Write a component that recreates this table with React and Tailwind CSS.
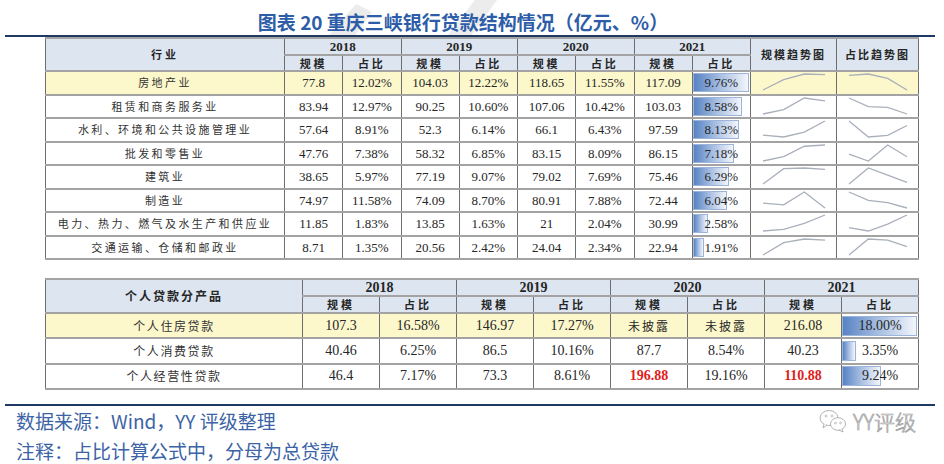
import React from "react";

const industry = [
  { name: "房地产业", hl: true, v: [77.8, 104.03, 118.65, 117.09], p: [12.02, 12.22, 11.55, 9.76] },
  { name: "租赁和商务服务业", v: [83.94, 90.25, 107.06, 103.03], p: [12.97, 10.6, 10.42, 8.58] },
  { name: "水利、环境和公共设施管理业", v: [57.64, 52.3, 66.1, 97.59], p: [8.91, 6.14, 6.43, 8.13] },
  { name: "批发和零售业", v: [47.76, 58.32, 83.15, 86.15], p: [7.38, 6.85, 8.09, 7.18] },
  { name: "建筑业", v: [38.65, 77.19, 79.02, 75.46], p: [5.97, 9.07, 7.69, 6.29] },
  { name: "制造业", v: [74.97, 74.09, 80.91, 72.44], p: [11.58, 8.7, 7.88, 6.04] },
  { name: "电力、热力、燃气及水生产和供应业", v: [11.85, 13.85, 21, 30.99], p: [1.83, 1.63, 2.04, 2.58] },
  { name: "交通运输、仓储和邮政业", v: [8.71, 20.56, 24.04, 22.94], p: [1.35, 2.42, 2.34, 1.91] },
];

const vText = [
  ["77.8", "104.03", "118.65", "117.09"],
  ["83.94", "90.25", "107.06", "103.03"],
  ["57.64", "52.3", "66.1", "97.59"],
  ["47.76", "58.32", "83.15", "86.15"],
  ["38.65", "77.19", "79.02", "75.46"],
  ["74.97", "74.09", "80.91", "72.44"],
  ["11.85", "13.85", "21", "30.99"],
  ["8.71", "20.56", "24.04", "22.94"],
];

const personal = [
  { name: "个人住房贷款", hl: true, cells: ["107.3", "16.58%", "146.97", "17.27%", "未披露", "未披露", "216.08"], bar: 18.0 },
  { name: "个人消费贷款", cells: ["40.46", "6.25%", "86.5", "10.16%", "87.7", "8.54%", "40.23"], bar: 3.35 },
  { name: "个人经营性贷款", cells: ["46.4", "7.17%", "73.3", "8.61%", "196.88", "19.16%", "110.88"], bar: 9.24, red: [4, 6] },
];

const cell = "border-x border-x-[#6e6e6e] border-y-2 border-y-[#a3a3a3] p-0 text-center leading-none";
const cn = "font-['Noto_Sans_CJK_SC',sans-serif]";

function Spark({ vals, w, h }) {
  const min = Math.min(...vals);
  const max = Math.max(...vals);
  const pts = vals
    .map((v, i) => {
      const x = 12 + (i * (w - 24)) / (vals.length - 1);
      const y = 1 + ((max - v) / (max - min)) * (h - 3);
      return `${x},${y}`;
    })
    .join(" ");
  return (
    <svg width={w} height={h} className="block">
      <polyline points={pts} fill="none" stroke="#a9afbb" strokeWidth="1.3" />
    </svg>
  );
}

function Bar({ value, max, full, text, size, hcls }) {
  return (
    <div className={"relative flex items-center justify-center " + hcls}>
      <div
        className="absolute left-0 top-[1px] bottom-[1px] bg-gradient-to-r from-[#5883c4] via-[#a9c0e2] to-[#f3f6fb] border border-[#9db4da]"
        style={{ width: (value / max) * full }}
      />
      <span className={"relative " + size}>{text}</span>
    </div>
  );
}

function SubHead({ n }) {
  const out = [];
  for (let i = 0; i < n; i++) {
    out.push(
      <td key={"a" + i} className={cell + " font-bold text-[11px] tracking-[3px] " + cn}>规模</td>,
      <td key={"b" + i} className={cell + " font-bold text-[11px] tracking-[3px] " + cn}>占比</td>
    );
  }
  return out;
}

export default function App() {
  return (
    <div className="relative w-[944px] h-[464px] bg-white overflow-hidden font-['Liberation_Serif','Noto_Sans_CJK_SC',serif] text-[#262626]">
      <svg className="absolute left-0 top-0" width="944" height="60">
        <polygon points="318,48 346,48 372,12 356,4" fill="#ececec" />
        <polygon points="438,48 462,48 500,-4 478,-4" fill="#ececec" />
      </svg>

      <div className="relative h-[35px] flex items-center justify-center pr-[18px] pt-[10px]">
        <h1 className="text-[19px] font-bold text-[#2d5da8] font-['Noto_Sans_CJK_SC',sans-serif]">
          图表 20 重庆三峡银行贷款结构情况（亿元、%）
        </h1>
      </div>
      <div className="relative ml-[5px] w-[930px] h-[2px] bg-[#1f3864]" />

      <table className="relative ml-[45px] w-[873px] table-fixed border-collapse">
        <colgroup>
          <col className="w-[239px]" />
          {[0, 1, 2, 3, 4, 5, 6, 7].map((i) => (
            <col key={i} className="w-[58.25px]" />
          ))}
          <col className="w-[86px]" />
          <col className="w-[82px]" />
        </colgroup>
        <thead className="bg-[#dce5f0]">
          <tr className="h-[17px]">
            <td rowSpan={2} className={cell + " font-bold text-[11px] tracking-[3px] " + cn}>行业</td>
            {["2018", "2019", "2020", "2021"].map((y) => (
              <td key={y} colSpan={2} className={cell + " font-bold text-[13px]"}>{y}</td>
            ))}
            <td rowSpan={2} className={cell + " font-bold text-[11px] tracking-[2px] " + cn}>规模趋势图</td>
            <td rowSpan={2} className={cell + " font-bold text-[11px] tracking-[2px] " + cn}>占比趋势图</td>
          </tr>
          <tr className="h-[16px]">
            <SubHead n={4} />
          </tr>
        </thead>
        <tbody>
          {industry.map((r, ri) => (
            <tr key={r.name} className={"h-[23.5px] " + (r.hl ? "bg-[#fcf8cc]" : "bg-white")}>
              <td className={cell + " text-[11px] tracking-[2.4px] text-[#333] " + cn}>{r.name}</td>
              {[0, 1, 2, 3].map((i) => (
                <React.Fragment key={i}>
                  <td className={cell + " text-[13px]"}>{vText[ri][i]}</td>
                  {i < 3 ? (
                    <td className={cell + " text-[13px]"}>{r.p[i].toFixed(2)}%</td>
                  ) : (
                    <td className={cell + " bg-white"}>
                      <Bar value={r.p[3]} max={9.76} full={56} text={r.p[3].toFixed(2) + "%"} size="text-[13px]" hcls="h-[21px]" />
                    </td>
                  )}
                </React.Fragment>
              ))}
              <td className={cell}>
                <Spark vals={r.v} w={86} h={19} />
              </td>
              <td className={cell}>
                <Spark vals={r.p} w={82} h={19} />
              </td>
            </tr>
          ))}
        </tbody>
      </table>

      <table className="relative mt-[18px] ml-[45px] w-[873px] table-fixed border-collapse">
        <colgroup>
          <col className="w-[257px]" />
          {[0, 1, 2, 3, 4, 5, 6, 7].map((i) => (
            <col key={i} className="w-[77px]" />
          ))}
        </colgroup>
        <thead className="bg-[#dce5f0]">
          <tr className="h-[17px]">
            <td rowSpan={2} className={cell + " font-bold text-[12px] tracking-[2px] " + cn}>个人贷款分产品</td>
            {["2018", "2019", "2020", "2021"].map((y) => (
              <td key={y} colSpan={2} className={cell + " font-bold text-[14px]"}>{y}</td>
            ))}
          </tr>
          <tr className="h-[17px]">
            <SubHead n={4} />
          </tr>
        </thead>
        <tbody>
          {personal.map((r) => (
            <tr key={r.name} className={"h-[25.3px] " + (r.hl ? "bg-[#fcf8cc]" : "bg-white")}>
              <td className={cell + " text-[12px] tracking-[1.6px] text-[#333] " + cn}>{r.name}</td>
              {r.cells.map((c, i) => {
                const isCn = c === "未披露";
                const isRed = r.red && r.red.includes(i);
                return (
                  <td
                    key={i}
                    className={
                      cell +
                      (isCn ? " text-[12px] tracking-[2px] " + cn : " text-[14px]") +
                      (isRed ? " text-[#e11d1d] font-bold" : "")
                    }
                  >
                    {c}
                  </td>
                );
              })}
              <td className={cell + " bg-white"}>
                <Bar value={r.bar} max={18} full={75} text={r.bar.toFixed(2) + "%"} size="text-[14px]" hcls="h-[22px]" />
              </td>
            </tr>
          ))}
        </tbody>
      </table>

      <div className="relative mt-[14px] ml-[5px] w-[930px] h-[2px] bg-[#1f3864]" />
      <div className="relative flex justify-between pl-[16px] pr-[28px] text-[19px] text-[#3b63a6] font-['Noto_Sans_CJK_SC',sans-serif] leading-[30px]">
        <div>
          <div>数据来源：Wind，YY 评级整理</div>
          <div>注释：占比计算公式中，分母为总贷款</div>
        </div>
        <div className="flex items-center gap-[6px] h-[30px] text-[21px] text-white [-webkit-text-stroke:0.7px_#9a9a9a] font-light">
          <svg width="28" height="24" viewBox="0 0 28 24">
            <ellipse cx="10" cy="9" rx="9" ry="7.5" fill="white" stroke="#aaa" strokeWidth="0.9" />
            <path d="M5 15 L4 19 L8 16" fill="white" stroke="#aaa" strokeWidth="0.9" />
            <circle cx="7" cy="7" r="1" fill="none" stroke="#aaa" strokeWidth="0.7" />
            <circle cx="13" cy="7" r="1" fill="none" stroke="#aaa" strokeWidth="0.7" />
            <ellipse cx="19" cy="15" rx="7.5" ry="6.3" fill="white" stroke="#aaa" strokeWidth="0.9" />
            <path d="M23 20 L24 23 L20 21" fill="white" stroke="#aaa" strokeWidth="0.9" />
            <circle cx="16.5" cy="14" r="0.9" fill="none" stroke="#aaa" strokeWidth="0.7" />
            <circle cx="21.5" cy="14" r="0.9" fill="none" stroke="#aaa" strokeWidth="0.7" />
          </svg>
          <span>YY评级</span>
        </div>
      </div>
    </div>
  );
}
